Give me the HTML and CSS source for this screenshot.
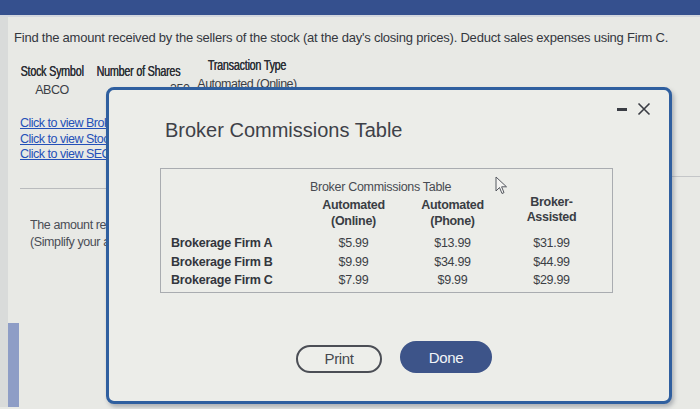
FILE: index.html
```html
<!DOCTYPE html>
<html>
<head>
<meta charset="utf-8">
<link rel="stylesheet" href="styles.css">
</head>
<body>
<div class="topbar"></div>
<div class="page">
  <div class="scroll"><div class="thumb"></div></div>
  <div class="content">
    <p class="question">Find the amount received by the sellers of the stock (at the day's closing prices). Deduct sales expenses using Firm C.</p>
    <div class="given">
      <div class="gcol c1"><div class="gh">Stock Symbol</div><div class="gv">ABCO</div></div>
      <div class="gcol c2"><div class="gh">Number of Shares</div><div class="gv u">350</div></div>
      <div class="gcol c3"><div class="gh">Transaction Type</div><div class="gv u">Automated (Online)</div></div>
    </div>
    <div class="links">
      <div class="lk"><a class="link">Click to view Broker Commissions Table</a></div>
      <div class="lk"><a class="link">Click to view Stock Table</a></div>
      <div class="lk"><a class="link">Click to view SEC Fees</a></div>
    </div>
    <hr class="sep">
    <div class="answer">
      <div>The amount received is</div>
      <div>(Simplify your answer.)</div>
    </div>
  </div>
  <div class="rightline"></div>
</div>

<div class="dialog">
  <div class="dhead">
    <h1 class="dtitle">Broker Commissions Table</h1>
    <div class="dctrl">
      <span class="minus"></span>
      <svg class="close" width="14" height="14" viewBox="0 0 14 14"><path d="M1.5 1.5 L12.5 12.5 M12.5 1.5 L1.5 12.5" stroke="#3a3d44" stroke-width="1.6" fill="none"/></svg>
    </div>
  </div>
  <div class="tbox">
    <table class="ctable">
      <caption>Broker Commissions Table</caption>
      <thead>
        <tr><th class="lab"></th><th>Automated<br>(Online)</th><th>Automated<br>(Phone)</th><th class="ba">Broker-<br>Assisted</th></tr>
      </thead>
      <tbody>
        <tr><td class="lab">Brokerage Firm A</td><td>$5.99</td><td>$13.99</td><td>$31.99</td></tr>
        <tr><td class="lab">Brokerage Firm B</td><td>$9.99</td><td>$34.99</td><td>$44.99</td></tr>
        <tr><td class="lab">Brokerage Firm C</td><td>$7.99</td><td>$9.99</td><td>$29.99</td></tr>
      </tbody>
    </table>
    <svg class="cursor" width="14" height="20" viewBox="0 0 14 20"><path d="M1 1 L1 15 L4.5 11.5 L7 17.5 L9 16.6 L6.6 10.8 L11.5 10.8 Z" fill="#f4f4f2" stroke="#55585f" stroke-width="1"/></svg>
  </div>
  <div class="buttons">
    <button class="btn print">Print</button>
    <button class="btn done">Done</button>
  </div>
</div>
</body>
</html>
```
FILE: styles.css
```css
* { box-sizing: border-box; }
html, body { margin: 0; padding: 0; }
body {
  width: 700px;
  height: 409px;
  overflow: hidden;
  background: #e8e9e5;
  font-family: "Liberation Sans", Arial, sans-serif;
  color: #3b3e45;
  position: relative;
}
.topbar {
  height: 17px;
  background: #35508e;
  border-bottom: 2px solid #d3d7de;
}
.page {
  display: flex;
  height: 390px;
}
.scroll {
  width: 20px;
  flex: none;
  display: flex;
  flex-direction: column;
  background: linear-gradient(90deg, #d9dbda 0 8px, transparent 8px);
}
.thumb {
  margin: 306px 0 0 8px;
  width: 11px;
  flex: 1;
  background: #8e9dc6;
}
.content {
  flex: none;
  width: 86px;
  white-space: nowrap;
}
.question {
  margin: 13px 0 0 -6px;
  font-size: 13px;
  letter-spacing: -0.22px;
  color: #34373e;
}
.given {
  display: flex;
  margin-top: 12px;
  font-size: 12.5px;
  letter-spacing: -0.5px;
}
.gcol { display: flex; flex-direction: column; flex: none; }
.gh {
  color: #2c2f35;
  font-size: 14px;
  letter-spacing: -0.3px;
  text-shadow: 0.3px 0 0 #2c2f35;
  transform: scaleX(0.77);
}
.c1 { width: 64px; align-items: center; margin-top: 6px; }
.c1 .gv { margin-top: 4px; }
.c2 { width: 90px; margin-left: 9px; align-items: center; margin-top: 6px; }
.c2 .gv { align-self: flex-start; margin-left: 77px; margin-top: 3px; }
.c3 { width: 84px; margin-left: 22px; align-items: center; }
.c3 .gv { margin-top: 4px; }
.u { text-decoration: underline; }
.links {
  display: flex;
  flex-direction: column;
  margin-top: 19px;
  font-size: 12.5px;
  letter-spacing: -0.5px;
  line-height: 15.5px;
}
.lk { width: 86px; overflow: hidden; }
.link {
  color: #2450b8;
  text-decoration: underline;
}
.sep {
  border: 0;
  border-top: 1px solid #b9bbbd;
  margin: 25px 0 0 0;
  width: 86px;
}
.answer {
  margin: 28px 0 0 10px;
  font-size: 12.5px;
  letter-spacing: -0.4px;
  line-height: 17px;
  color: #4a4d55;
  overflow: hidden;
  width: 76px;
}
.rightline {
  position: absolute;
  left: 672px;
  right: 0;
  top: 176px;
  border-top: 1px solid #c4c6c8;
}
.dialog {
  position: absolute;
  left: 106px;
  top: 87px;
  width: 566px;
  height: 317px;
  background: #ecede9;
  border: 3px solid #2f5f9f;
  border-radius: 8px;
  box-shadow: 2px 3px 4px rgba(60,70,90,0.35);
  display: flex;
  flex-direction: column;
}
.dhead {
  display: flex;
  justify-content: space-between;
  align-items: flex-start;
  padding: 0 18px 0 56px;
  height: 78px;
}
.dtitle {
  margin: 29px 0 0 0;
  font-size: 20px;
  font-weight: normal;
  color: #3e4148;
}
.dctrl {
  display: flex;
  align-items: center;
  gap: 10px;
  margin-top: 12px;
}
.minus {
  width: 10px;
  height: 3px;
  background: #3a3d44;
  display: block;
}
.close { display: block; }
.tbox {
  margin-left: 51px;
  width: 453px;
  height: 125px;
  border: 1px solid #a9acb0;
  position: relative;
  padding: 11px 0 0 10px;
}
.ctable {
  border-collapse: collapse;
  font-size: 12.5px;
  letter-spacing: -0.3px;
  color: #3c3f46;
}
.ctable caption {
  text-align: left;
  padding-left: 139px;
  font-size: 12.5px;
  line-height: 14px;
  color: #484b52;
}
.ctable th {
  font-weight: bold;
  line-height: 15.5px;
  text-align: center;
  width: 99px;
  padding: 4px 0 5px 0;
  vertical-align: top;
  color: #3a3d44;
}
.ctable th.lab { width: 133px; }
.ctable th.ba { padding-top: 1px; line-height: 14.5px; }
.ctable td {
  text-align: center;
  line-height: 18.5px;
  padding: 0;
}
.ctable td.lab {
  text-align: left;
  font-weight: bold;
  letter-spacing: -0.2px;
  color: #33363d;
}
.cursor {
  position: absolute;
  left: 334px;
  top: 7px;
}
.buttons {
  display: flex;
  justify-content: flex-start;
  gap: 18px;
  padding-left: 187px;
  margin-top: 48px;
  align-items: center;
}
.btn {
  font-family: "Liberation Sans", Arial, sans-serif;
  font-size: 15px;
  border-radius: 16px;
  letter-spacing: -0.4px;
}
.print {
  width: 86px;
  height: 28px;
  border: 2px solid #4b4e55;
  background: #edeeea;
  color: #45484e;
  margin-top: 3px;
}
.done {
  width: 92px;
  height: 32px;
  border: 0;
  background: #3d5489;
  color: #f2f4f8;
}
```
